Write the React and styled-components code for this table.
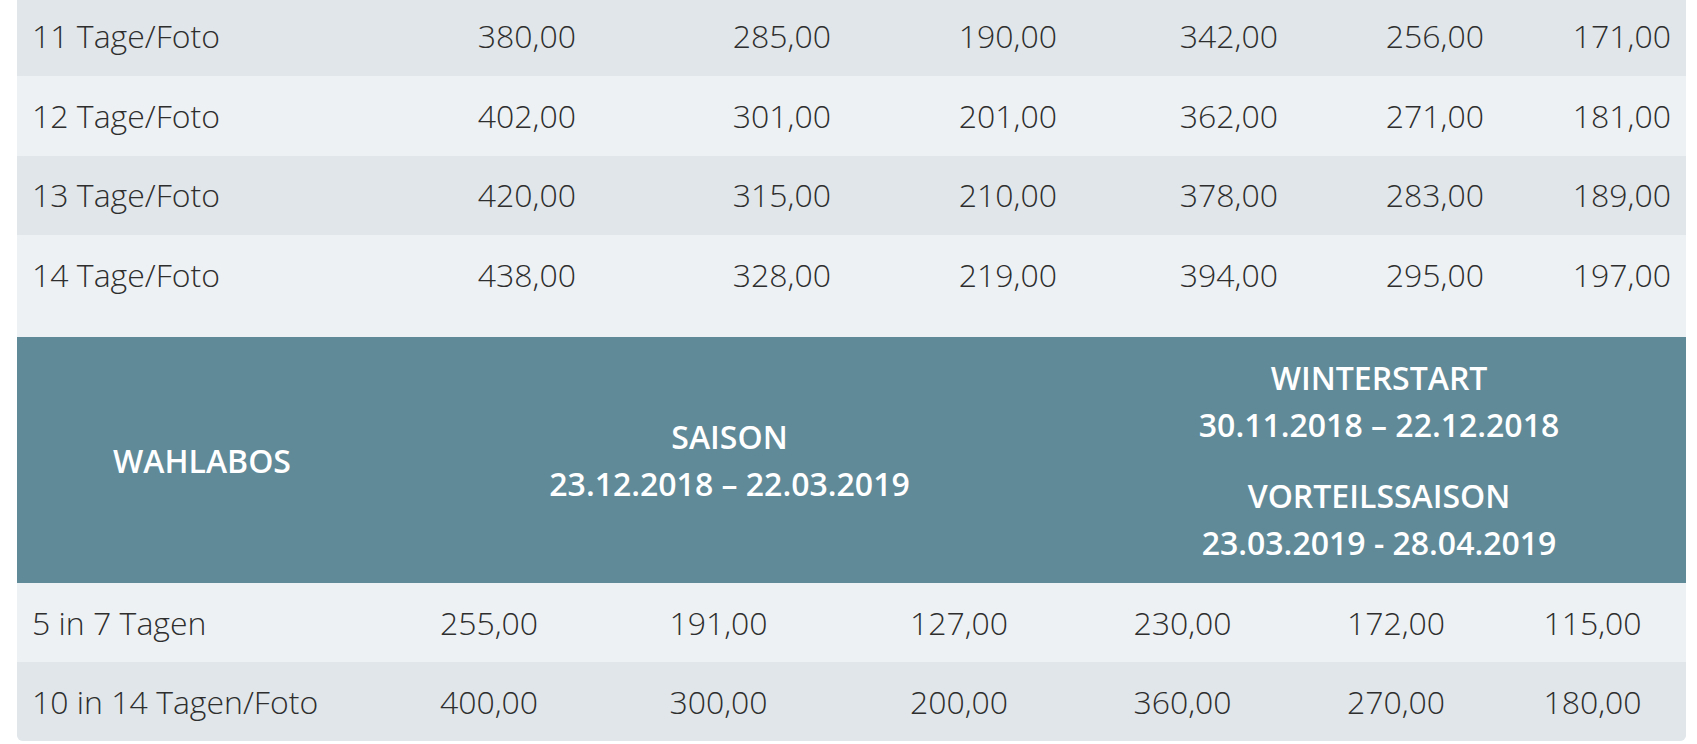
import React from "react";
import styled, { createGlobalStyle } from "styled-components";

const GlobalStyle = createGlobalStyle`
  html, body {
    margin: 0;
    padding: 0;
    background: #ffffff;
  }
  body {
    font-family: "Open Sans", "Noto Sans", "Liberation Sans", sans-serif;
    color: #333;
    overflow: hidden;
  }
`;

const Page = styled.div`
  padding: 0 11px 0 17px;
  margin-top: -3.5px;
`;

const Card = styled.div`
  width: 1669px;
  background: #edf1f4;
  border-radius: 0 0 6px 6px;
  overflow: hidden;
`;

const PriceTable = styled.table`
  width: 1669px;
  table-layout: fixed;
  border-collapse: collapse;
  border-spacing: 0;
  margin-bottom: ${(p) => (p.$spaced ? "22.6px" : "0")};
`;

const Row = styled.tr`
  background: ${(p) => (p.$dark ? "#e0e6ea" : "#edf1f4")};
`;

const Label = styled.td`
  padding: ${(p) => (p.$tight ? "15.4px" : "15.8px")} 15px;
  font-size: 32px;
  line-height: 48px;
  font-weight: 300;
  color: #2e2e2e;
  text-align: left;
  white-space: nowrap;
`;

const Price = styled.td`
  padding: ${(p) => (p.$tight ? "15.4px" : "15.8px")}
    ${(p) => (p.$align === "right" ? "15px" : "0")}
    ${(p) => (p.$tight ? "15.4px" : "15.8px")} 0;
  font-size: 32px;
  line-height: 48px;
  font-weight: 300;
  color: #2e2e2e;
  text-align: ${(p) => p.$align};
  white-space: nowrap;
`;

const HeadRow = styled.tr`
  background: #608a98;
`;

const HeadCell = styled.th`
  padding: 17px 0;
  font-size: 32px;
  line-height: 47px;
  font-weight: 600;
  color: #ffffff;
  text-align: center;
  vertical-align: middle;
  text-transform: uppercase;
`;

const HeadBlock = styled.div`
  & + & {
    margin-top: 24px;
  }
`;

const widths = [370, 204, 255, 226, 221, 206, 187];

const Cols = () => (
  <colgroup>
    {widths.map((w, i) => (
      <col key={i} style={{ width: w }} />
    ))}
  </colgroup>
);

const dayRows = [
  ["11 Tage/Foto", "380,00", "285,00", "190,00", "342,00", "256,00", "171,00"],
  ["12 Tage/Foto", "402,00", "301,00", "201,00", "362,00", "271,00", "181,00"],
  ["13 Tage/Foto", "420,00", "315,00", "210,00", "378,00", "283,00", "189,00"],
  ["14 Tage/Foto", "438,00", "328,00", "219,00", "394,00", "295,00", "197,00"],
];

const choiceRows = [
  ["5 in 7 Tagen", "255,00", "191,00", "127,00", "230,00", "172,00", "115,00"],
  ["10 in 14 Tagen/Foto", "400,00", "300,00", "200,00", "360,00", "270,00", "180,00"],
];

export default function App() {
  return (
    <>
      <GlobalStyle />
      <Page>
        <Card>
          <PriceTable $spaced>
            <Cols />
            <tbody>
              {dayRows.map((r, i) => (
                <Row key={r[0]} $dark={i % 2 === 0}>
                  <Label>{r[0]}</Label>
                  {r.slice(1).map((v, j) => (
                    <Price key={j} $align="right">
                      {v}
                    </Price>
                  ))}
                </Row>
              ))}
            </tbody>
          </PriceTable>
          <PriceTable>
            <Cols />
            <thead>
              <HeadRow>
                <HeadCell>Wahlabos</HeadCell>
                <HeadCell colSpan={3}>
                  <HeadBlock>
                    Saison
                    <br />
                    23.12.2018 – 22.03.2019
                  </HeadBlock>
                </HeadCell>
                <HeadCell colSpan={3}>
                  <HeadBlock>
                    Winterstart
                    <br />
                    30.11.2018 – 22.12.2018
                  </HeadBlock>
                  <HeadBlock>
                    Vorteilssaison
                    <br />
                    23.03.2019 - 28.04.2019
                  </HeadBlock>
                </HeadCell>
              </HeadRow>
            </thead>
            <tbody>
              {choiceRows.map((r, i) => (
                <Row key={r[0]} $dark={i % 2 === 1}>
                  <Label $tight>{r[0]}</Label>
                  {r.slice(1).map((v, j) => (
                    <Price key={j} $align="center" $tight>
                      {v}
                    </Price>
                  ))}
                </Row>
              ))}
            </tbody>
          </PriceTable>
        </Card>
      </Page>
    </>
  );
}
